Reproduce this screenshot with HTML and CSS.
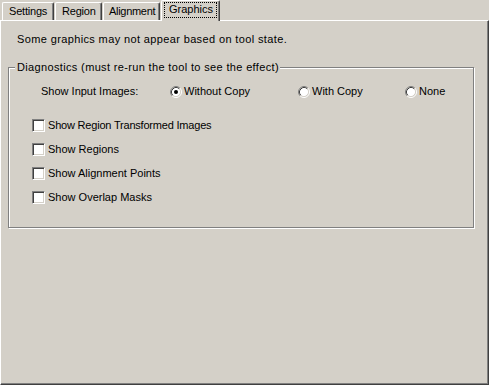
FILE: index.html
```html
<!DOCTYPE html>
<html>
<head>
<meta charset="utf-8">
<link rel="stylesheet" href="styles.css">
</head>
<body>
<div class="window">
  <div class="tabs">
    <div class="tab tab-settings">Settings</div>
    <div class="tab tab-region">Region</div>
    <div class="tab tab-alignment">Alignment</div>
    <div class="tab tab-graphics active"><span class="focus">Graphics</span></div>
  </div>
  <div class="panel">
    <p class="note">Some graphics may not appear based on tool state.</p>
    <div class="group">
      <span class="legend">Diagnostics (must re-run the tool to see the effect)</span>
      <div class="radio-row">
        <span class="row-label">Show Input Images:</span>
        <label class="radio">
          <svg class="radio-icon" width="12" height="12" viewBox="0 0 12 12">
            <circle cx="6" cy="6" r="4.5" fill="#fff"/>
            <path d="M2.11 9.89 A5.5 5.5 0 0 1 9.89 2.11" fill="none" stroke="#808080"/>
            <path d="M9.89 2.11 A5.5 5.5 0 0 1 2.11 9.89" fill="none" stroke="#fff"/>
            <path d="M2.82 9.18 A4.5 4.5 0 0 1 9.18 2.82" fill="none" stroke="#404040"/>
            <path d="M9.18 2.82 A4.5 4.5 0 0 1 2.82 9.18" fill="none" stroke="#d4d0c8"/>
            <circle cx="6" cy="6" r="2" fill="#000"/>
          </svg>
          <span>Without Copy</span>
        </label>
        <label class="radio">
          <svg class="radio-icon" width="12" height="12" viewBox="0 0 12 12">
            <circle cx="6" cy="6" r="4.5" fill="#fff"/>
            <path d="M2.11 9.89 A5.5 5.5 0 0 1 9.89 2.11" fill="none" stroke="#808080"/>
            <path d="M9.89 2.11 A5.5 5.5 0 0 1 2.11 9.89" fill="none" stroke="#fff"/>
            <path d="M2.82 9.18 A4.5 4.5 0 0 1 9.18 2.82" fill="none" stroke="#404040"/>
            <path d="M9.18 2.82 A4.5 4.5 0 0 1 2.82 9.18" fill="none" stroke="#d4d0c8"/>
          </svg>
          <span>With Copy</span>
        </label>
        <label class="radio">
          <svg class="radio-icon" width="12" height="12" viewBox="0 0 12 12">
            <circle cx="6" cy="6" r="4.5" fill="#fff"/>
            <path d="M2.11 9.89 A5.5 5.5 0 0 1 9.89 2.11" fill="none" stroke="#808080"/>
            <path d="M9.89 2.11 A5.5 5.5 0 0 1 2.11 9.89" fill="none" stroke="#fff"/>
            <path d="M2.82 9.18 A4.5 4.5 0 0 1 9.18 2.82" fill="none" stroke="#404040"/>
            <path d="M9.18 2.82 A4.5 4.5 0 0 1 2.82 9.18" fill="none" stroke="#d4d0c8"/>
          </svg>
          <span>None</span>
        </label>
      </div>
      <div class="checks">
        <label class="check"><span class="box"></span><span class="tight">Show Region Transformed Images</span></label>
        <label class="check"><span class="box"></span><span>Show Regions</span></label>
        <label class="check"><span class="box"></span><span>Show Alignment Points</span></label>
        <label class="check"><span class="box"></span><span>Show Overlap Masks</span></label>
      </div>
    </div>
  </div>
</div>
</body>
</html>
```
FILE: styles.css
```css
html, body {
  margin: 0;
  padding: 0;
  background: #d4d0c8;
}
body {
  font-family: "Liberation Sans", Arial, sans-serif;
  font-size: 11px;
  line-height: 13px;
  color: #000;
}
.window {
  width: 489px;
  height: 385px;
}
.tabs {
  display: flex;
  align-items: flex-end;
  gap: 1px;
  height: 20px;
  padding-left: 2px;
}
.tab {
  box-sizing: border-box;
  height: 18px;
  border-left: 1px solid #fff;
  border-top: 1px solid #fff;
  border-right: 1px solid #404040;
  border-top-left-radius: 2px;
  border-top-right-radius: 2px;
  box-shadow: inset -1px 0 0 #808080;
  padding: 2px 0 0 6px;
  white-space: nowrap;
  letter-spacing: -0.2px;
}
.tab-settings { width: 52px; }
.tab-region { width: 47px; }
.tab-alignment { width: 57px; padding-left: 5px; letter-spacing: -0.3px; }
.tab-graphics { width: 59px; }
.tab.active {
  height: 21px;
  margin-bottom: -1px;
  position: relative;
  z-index: 1;
  background: #d4d0c8;
  padding: 1px 0 0 2px;
  letter-spacing: 0;
}
.focus {
  display: inline-block;
  border: 1px dotted #000;
  padding: 0 3px 1px 4px;
}
.panel {
  box-sizing: border-box;
  width: 489px;
  height: 365px;
  border-left: 1px solid #fff;
  border-top: 1px solid #fff;
  border-right: 1px solid #404040;
  border-bottom: 1px solid #404040;
  box-shadow: inset -1px -1px 0 #808080;
  overflow: hidden;
}
.note {
  margin: 12px 0 0 16px;
  letter-spacing: 0.37px;
}
.group {
  position: relative;
  box-sizing: border-box;
  width: 466px;
  height: 161px;
  margin: 21px 0 0 7px;
  border: 1px solid #808080;
  box-shadow: inset 1px 1px 0 #fff, 1px 1px 0 #fff;
  padding: 17px 0 0 32px;
}
.legend {
  position: absolute;
  left: 6px;
  top: -7px;
  padding: 0 1px 0 2px;
  background: #d4d0c8;
  letter-spacing: 0.35px;
}
.radio-row {
  display: grid;
  grid-template-columns: 129px 128px 107px auto;
  align-items: center;
  height: 13px;
}
.radio {
  display: flex;
  align-items: center;
  gap: 2px;
}
.radio-icon {
  display: block;
  flex: none;
}
.checks {
  display: flex;
  flex-direction: column;
  gap: 11px;
  margin: 21px 0 0 -9px;
}
.check {
  display: flex;
  align-items: center;
  gap: 3px;
  height: 13px;
}
.tight {
  letter-spacing: -0.2px;
}
.box {
  box-sizing: border-box;
  width: 13px;
  height: 13px;
  flex: none;
  background: #fff;
  border-top: 1px solid #808080;
  border-left: 1px solid #808080;
  border-right: 1px solid #fff;
  border-bottom: 1px solid #fff;
  box-shadow: inset 1px 1px 0 #404040, inset -1px -1px 0 #d4d0c8;
}
```
